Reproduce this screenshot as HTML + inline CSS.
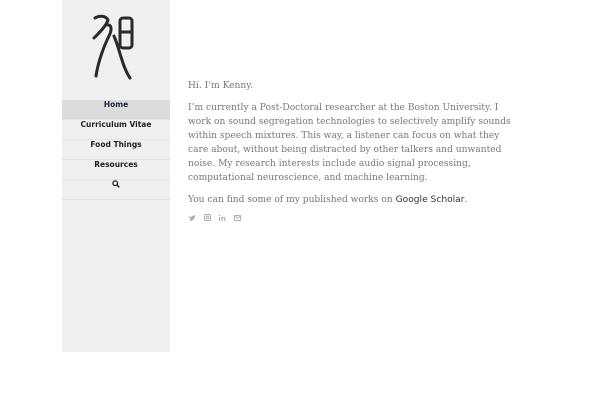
<!DOCTYPE html>
<html><head><meta charset="utf-8"><style>
body{margin:0;width:600px;height:400px;background:#fff;position:relative;overflow:hidden;font-family:"DejaVu Serif",serif}
#side{position:absolute;left:62px;top:0;width:108px;height:352px;background:#f0f0f0}
#nav{position:absolute;top:100px;left:0;width:108px}
#nav div{border-bottom:1px solid #e4e4e4;text-align:center;font:bold 7.5px "DejaVu Sans",sans-serif;color:#222;line-height:10px;box-sizing:border-box;height:20px}
#nav div.a{background:#dcdcdc;color:#1e2340}
#main{position:absolute;left:188px;top:79px;width:343px;font-size:9.1px;line-height:14px;color:#777}
p{margin:0 0 8px}
a{color:#333;font-family:"DejaVu Sans",sans-serif;text-decoration:none}
</style></head><body>
<div id="side">
<svg style="position:absolute;left:28px;top:12px" width="50" height="70" viewBox="0 0 50 70" fill="none" stroke="#2a2a2a" stroke-width="3" stroke-linecap="round">
<path d="M5 6 C10 3 16 4 18 8 C16 14 10 20 4 26"/>
<path d="M17 13 C22 12 22 18 19 24 C14 34 8 50 6 64"/>
<path d="M24 24 C30 38 32 54 40 66"/>
<rect x="30" y="6" width="12" height="30" rx="3"/>
<path d="M30 20 H42"/>
</svg>
<div id="nav">
<div class="a">Home</div><div>Curriculum Vitae</div><div>Food Things</div><div>Resources</div>
<div><svg width="8" height="8" viewBox="0 0 8 8"><circle cx="3.2" cy="3.2" r="2.3" stroke="#222" stroke-width="1.3" fill="none"/><path d="M5 5L7.3 7.3" stroke="#222" stroke-width="1.5"/></svg></div>
</div></div>
<div id="main">
<p>Hi. I’m Kenny.</p>
<p>I’m currently a Post-Doctoral researcher at the Boston University. I<br>work on sound segregation technologies to selectively amplify sounds<br>within speech mixtures. This way, a listener can focus on what they<br>care about, without being distracted by other talkers and unwanted<br>noise. My research interests include audio signal processing,<br>computational neuroscience, and machine learning.</p>
<p>You can find some of my published works on <a>Google Scholar</a>.</p>
<svg width="60" height="8" viewBox="0 0 60 8" style="display:block;margin-top:-1px" fill="#aaa" stroke="#aaa">
<path d="M0 2 L3 3 L6 1 L7 2 L6 5 L3 7 L1 6 L3 5 Z" stroke="none"/>
<rect x="16.5" y="0.5" width="6" height="6" rx="1.5" fill="none" stroke-width="1"/><circle cx="19.5" cy="3.5" r="1.3" fill="none" stroke-width="0.9"/>
<rect x="31" y="3" width="1.2" height="4" stroke="none"/><rect x="31" y="0.8" width="1.2" height="1.2" stroke="none"/><path d="M34 7V3.2M34 4.5C35 3 37 3 37 5V7" fill="none" stroke-width="1.1"/>
<rect x="46.5" y="1.5" width="6" height="5" fill="none" stroke-width="0.9"/><path d="M46.5 1.5L49.5 4.2L52.5 1.5" fill="none" stroke-width="0.8"/>
</svg>
</div>
</body></html>
